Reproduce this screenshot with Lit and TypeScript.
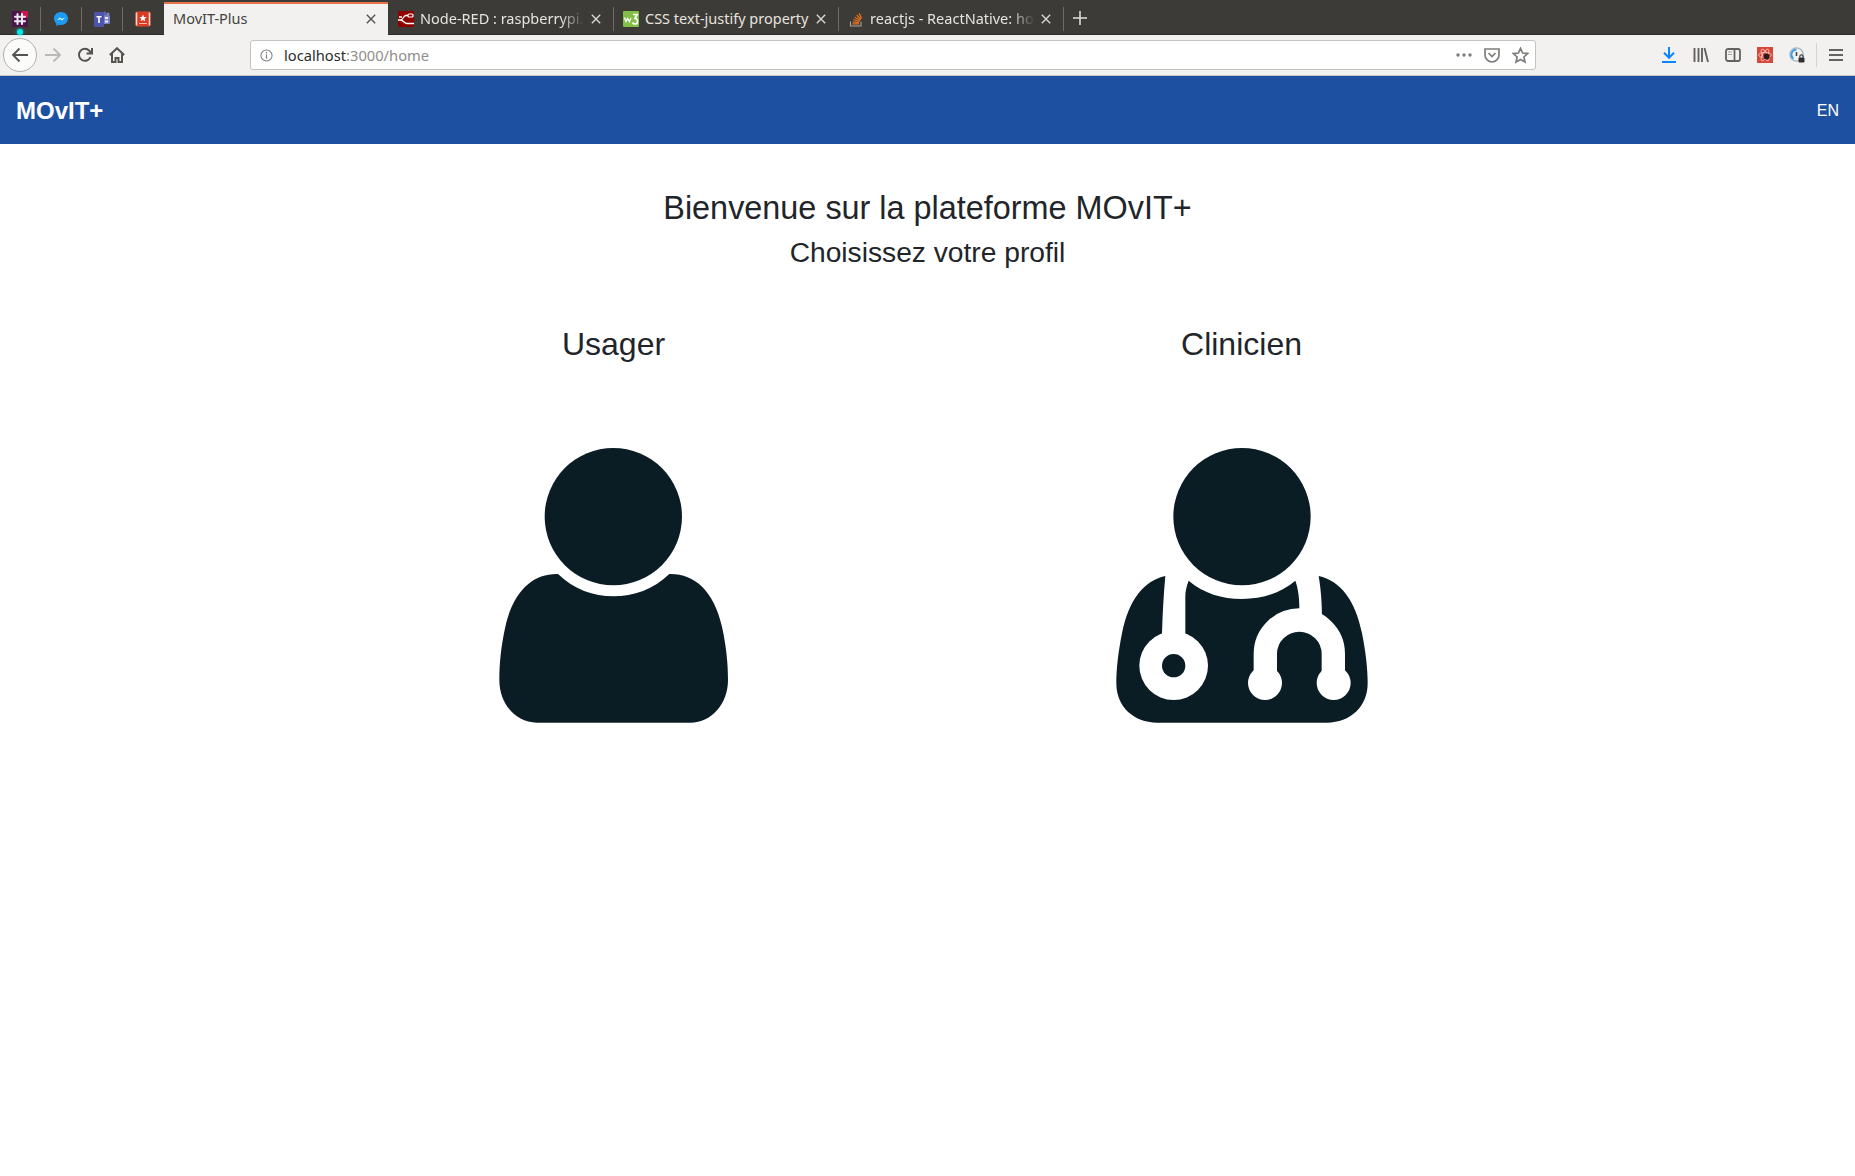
import { LitElement, html, css, svg } from 'lit';
import { customElement } from 'lit/decorators.js';

const slackIcon = svg`<svg viewBox="0 0 16 16" width="16" height="16">
  <rect width="16" height="16" fill="#4a154b"/><path d="M9 0h7v7H9z" fill="#c8174f"/>
  <path d="M5.500 3v10M10 3v10M3 5.800h10M3 10.200h10" stroke="#f1e9f0" stroke-width="2" stroke-linecap="round"/>
</svg>`;
const messengerIcon = svg`<svg viewBox="0 0 16 16" width="16" height="16">
  <path d="M8 1C4 1 1 3.900 1 7.600c0 2 .9 3.700 2.300 4.900V15l2.300-1.300c.8.2 1.600.3 2.400.3 4 0 7-2.900 7-6.500S12 1 8 1z" fill="#1c9bf2"/>
  <path d="M3.800 9.500 7 6.600l1.700 1.500 3.400-1.700-3.100 3.100-1.700-1.500z" fill="#fff"/>
</svg>`;
const teamsIcon = svg`<svg viewBox="0 0 16 16" width="16" height="16">
  <rect x="8" y="4" width="8" height="9" rx="1.500" fill="#7b83c9"/><circle cx="10.500" cy="2.600" r="2" fill="#5c63b4"/><circle cx="14" cy="3" r="1.500" fill="#7b83c9"/>
  <rect y="1" width="10" height="15" rx="1" fill="#4e55a8"/><path d="M2.500 5h5v1.600H5.800V12H4.200V6.600H2.500z" fill="#fff"/>
  <path d="M11 6h3v2h-3zM11 9.500h3v2h-3z" fill="#eef"/>
</svg>`;
const bookmarkIcon = svg`<svg viewBox="0 0 16 16" width="16" height="16">
  <rect x=".5" y=".5" width="15" height="15" rx="2" fill="#e8492d"/><rect x="2.500" y="1" width="11" height="14" fill="#d93a22"/>
  <path d="M1.500 1.500v13M14.500 1.500v13" stroke="#f7d9c9" stroke-width="1.500"/>
  <path d="m8 3.500 1.100 2.400 2.500.2-1.900 1.700.6 2.500L8 9l-2.300 1.300.6-2.500-1.900-1.700 2.500-.2z" fill="#fff"/><path d="M4 12.500h8" stroke="#f9b9a4"/>
</svg>`;
const nodeRedIcon = svg`<svg viewBox="0 0 16 16" width="16" height="16">
  <rect width="16" height="16" rx="1" fill="#8f0000"/>
  <path d="M0 9h2.500c3 0 2.500-4.500 5.500-4.500h2M0 9h2.500C5.500 9 6 12.500 9 12.500h1" fill="none" stroke="#fff" stroke-width="1.300"/>
  <rect x="10" y="3" width="5" height="3" rx="1" fill="none" stroke="#fff" stroke-width="1.200"/><path d="M10 12.500h6M1 6h3" stroke="#fff" stroke-width="1.300"/>
</svg>`;
const w3Icon = svg`<svg viewBox="0 0 16 16" width="16" height="16">
  <rect width="16" height="16" rx="1" fill="#82bf45"/>
  <path d="M1.500 6.500 3 10.500l1.700-3 1.700 3L8 7" fill="none" stroke="#fff" stroke-width="1.300"/>
  <path d="M10 3.500h4l-2 4c2 0 2.500 1.500 2.500 3s-1 2.500-2.500 2.500c-1 0-2-.5-2.500-1.500" fill="none" stroke="#fff" stroke-width="1.700"/>
</svg>`;
const stackIcon = svg`<svg viewBox="0 0 16 16" width="16" height="16">
  <path d="M2.500 10.500v4.500h10.500v-4.500" fill="none" stroke="#a9a59c" stroke-width="1.100"/>
  <path d="M4.500 12.800h6.500M4.700 10.800l6.300.9M5.400 8.500l6 2M6.700 6.200l5.300 3.300M8.800 4l4 4.500M11.200 2.200l2.400 5.300" stroke="#e8711c" stroke-width="1.300" fill="none"/>
</svg>`;
const closeIcon = svg`<svg viewBox="0 0 10 10" width="10" height="10"><path d="m.8.800 8.400 8.400M9.200.800.800 9.200" stroke="currentColor" stroke-width="1.400" fill="none"/></svg>`;

const userIcon = svg`<svg viewBox="-4 0 810 900" width="270" height="300">
  <circle cx="399" cy="260" r="206" fill="#0b1d24"/>
  <path fill="#0b1d24" d="M233 432C280 478 340 499 399 499C460 499 520 478 567 432C640 430 700 480 725 590C738 650 743 700 743 750C743 820 695 878 630 878L170 878C105 878 57 820 57 750C57 700 62 650 75 590C100 480 160 430 233 432Z"/>
</svg>`;
const clinicianIcon = svg`<svg viewBox="5 0 840 900" width="280" height="300">
  <circle cx="425" cy="260" r="206" fill="#0b1d24"/>
  <path fill="#0b1d24" d="M195 438L265 452C310 490 365 507 425 507C485 507 540 490 585 452L655 438C720 452 765 510 785 610C797 670 802 720 802 760C802 830 750 878 680 878L170 878C100 878 48 830 48 760C48 720 53 670 65 610C85 510 130 452 195 438Z"/>
  <path fill="#fff" d="M195 430L270 430L265 452C258 470 255 485 255 500L255 625L185 625L185 610C187 550 190 490 195 438Z"/>
  <path fill="#fff" d="M578 430L652 430L655 438C662 480 665 520 665 570L597 570L597 530C597 500 592 470 585 452Z"/>
  <circle cx="220" cy="707" r="103" fill="#fff"/><circle cx="220" cy="707" r="35" fill="#0b1d24"/>
  <path d="M495 750V672A102 102 0 0 1 699 672V750" fill="none" stroke="#fff" stroke-width="70"/>
  <circle cx="494" cy="759" r="51" fill="#fff"/><circle cx="700" cy="759" r="51" fill="#fff"/>
</svg>`;

@customElement('app-root')
export class AppRoot extends LitElement {
  static styles = css`
    :host {
      display: block;
      min-height: 1176px;
      background: #fff;
      font-family: "Liberation Sans", Arial, sans-serif;
      color: #212529;
    }

    /* browser chrome */
    .tabbar {
      display: flex;
      height: 35px;
      box-sizing: border-box;
      background: #3d3b37;
      border-bottom: 1px solid #2a2925;
      font-family: "Noto Sans", sans-serif;
      font-size: 14.5px;
      color: #e6e4df;
    }
    .pinned {
      position: relative;
      width: 41px;
      display: flex;
      align-items: center;
      justify-content: center;
      box-sizing: border-box;
      padding: 4px 1px 0 0;
    }
    .pinned svg, .tab svg { flex: none; display: block; }
    .pinned.sepd::after, .tab.sepd::after {
      content: '';
      position: absolute;
      right: 0;
      top: 7px;
      height: 24px;
      width: 1px;
      background: #6e6c67;
    }
    .dot {
      position: absolute;
      left: 17px;
      top: 29px;
      width: 6px;
      height: 6px;
      border-radius: 50%;
      background: #00e5e5;
      box-shadow: 0 0 3px #00e5e5;
    }
    .tab {
      position: relative;
      width: 225px;
      flex: none;
      box-sizing: border-box;
      display: flex;
      align-items: center;
      gap: 6px;
      padding: 4px 13px 0 9px;
    }
    .tab.active {
      width: 224px;
      margin-right: 1px;
      height: 35px;
      margin-top: 2px;
      padding: 0 12px 4px 9px;
      background: #f2f1ef;
      color: #45433f;
      border-top: 2px solid #e8734a;
    }
    .title {
      flex: 1;
      min-width: 0;
      margin-bottom: 2px;
      white-space: nowrap;
      overflow: hidden;
    }
    .title.fade {
      -webkit-mask-image: linear-gradient(to right, #000 85%, transparent);
      mask-image: linear-gradient(to right, #000 85%, transparent);
    }
    .close { color: #d8d6d1; flex: none; display: flex; }
    .active .close { color: #55534f; }
    .newtab {
      width: 34px;
      display: flex;
      align-items: center;
      justify-content: center;
      padding-top: 1px;
      margin-left: -1px;
    }
    .toolbar {
      display: flex;
      align-items: center;
      height: 41px;
      box-sizing: border-box;
      background: #f2f1ef;
      border-bottom: 1px solid #c9c8c5;
      padding-left: 3px;
    }
    .btn {
      flex: none;
      height: 34px;
      display: flex;
      align-items: center;
      justify-content: center;
    }
    .back {
      width: 34px;
      box-sizing: border-box;
      border: 1px solid #b1b0ad;
      border-radius: 50%;
      background: #fbfbfa;
    }
    .forward, .reload { width: 32px; }
    .home { width: 31px; }
    .urlbar {
      flex: none;
      width: 1286px;
      height: 30px;
      margin-left: 118px;
      box-sizing: border-box;
      border: 1px solid #c4c3c0;
      border-radius: 3px;
      background: #fff;
      display: flex;
      align-items: center;
      padding: 0 1px 0 9px;
      font-family: "Noto Sans", sans-serif;
      font-size: 14.7px;
    }
    .url { margin-left: 11px; flex: 1; color: #8e8d8a; }
    .url b { font-weight: 400; color: #2e2d2a; }
    .urlbtn { width: 28px; display: flex; justify-content: center; }
    .tools { display: flex; align-items: center; margin-left: 117px; }
    .tools .btn { width: 32px; }
    .divider { width: 1px; height: 24px; background: #d5d4d1; margin-left: 3px; }
    .tools .menu { margin-left: 3px; }

    /* page */
    .navbar {
      display: flex;
      align-items: center;
      justify-content: space-between;
      box-sizing: border-box;
      height: 68px;
      padding: 1px 16px 0;
      background: #1e50a2;
      color: #fff;
    }
    .brand { font-size: 24px; font-weight: 700; }
    .lang { font-size: 16px; }
    main {
      display: flex;
      flex-direction: column;
      align-items: center;
      padding-top: 44px;
    }
    h1 {
      margin: 0;
      font-size: 32.4px;
      line-height: 40px;
      font-weight: 400;
    }
    h2 {
      margin: 4px 0 0;
      font-size: 28.2px;
      line-height: 40px;
      font-weight: 400;
    }
    .profiles {
      display: grid;
      grid-template-columns: 1fr 1fr;
      width: 1256px;
      margin-top: 52px;
    }
    .profile {
      display: flex;
      flex-direction: column;
      align-items: center;
    }
    .profile h3 {
      margin: 0 0 66px;
      font-size: 32px;
      line-height: 40px;
      font-weight: 400;
    }
    .profile svg { display: block; }
  `;

  render() {
    return html`
      <div class="tabbar">
        <div class="pinned sepd">${slackIcon}<span class="dot"></span></div>
        <div class="pinned sepd">${messengerIcon}</div>
        <div class="pinned sepd">${teamsIcon}</div>
        <div class="pinned">${bookmarkIcon}</div>
        <div class="tab active">
          <span class="title">MovIT-Plus</span>
          <span class="close">${closeIcon}</span>
        </div>
        <div class="tab sepd">
          ${nodeRedIcon}<span class="title fade">Node-RED : raspberrypi.</span>
          <span class="close">${closeIcon}</span>
        </div>
        <div class="tab sepd">
          ${w3Icon}<span class="title">CSS text-justify property</span>
          <span class="close">${closeIcon}</span>
        </div>
        <div class="tab sepd">
          ${stackIcon}<span class="title fade">reactjs - ReactNative: ho</span>
          <span class="close">${closeIcon}</span>
        </div>
        <div class="newtab">
          <svg viewBox="0 0 14 14" width="14" height="14"><path d="M7 0v14M0 7h14" stroke="#e6e4df" stroke-width="1.500"/></svg>
        </div>
      </div>

      <div class="toolbar">
        <div class="btn back">
          <svg viewBox="0 0 18 16" width="18" height="16"><path d="M17 8H2M8.500 1.500 2 8l6.500 6.500" fill="none" stroke="#55534f" stroke-width="1.800"/></svg>
        </div>
        <div class="btn forward">
          <svg viewBox="0 0 18 16" width="18" height="16"><path d="M1 8h15M9.500 1.500 16 8l-6.500 6.500" fill="none" stroke="#b9b8b5" stroke-width="1.800"/></svg>
        </div>
        <div class="btn reload">
          <svg viewBox="0 0 16 16" width="16" height="16"><path d="M13.500 10a6 6 0 1 1-1.200-6.300L14.500 6M15 1v5.500H9.500" fill="none" stroke="#55534f" stroke-width="2"/></svg>
        </div>
        <div class="btn home">
          <svg viewBox="0 0 16 16" width="16" height="16"><path d="M.8 8 8 1.200 15.200 8M3 6.500V15h3.500v-4h3v4H13V6.500" fill="none" stroke="#55534f" stroke-width="2"/></svg>
        </div>
        <div class="urlbar">
          <svg viewBox="0 0 14 14" width="13" height="13"><circle cx="7" cy="7" r="6" fill="none" stroke="#7e7d7a" stroke-width="1.100"/><path d="M7 6v4.500M7 3.300v1.500" stroke="#7e7d7a" stroke-width="1.300"/></svg>
          <span class="url"><b>localhost</b>:3000/home</span>
          <span class="urlbtn"><svg viewBox="0 0 16 4" width="16" height="4"><circle cx="2" cy="2" r="1.700" fill="#7e7d7a"/><circle cx="8" cy="2" r="1.700" fill="#7e7d7a"/><circle cx="14" cy="2" r="1.700" fill="#7e7d7a"/></svg></span>
          <span class="urlbtn"><svg viewBox="0 0 16 15" width="16" height="15"><path d="M1 1h14v6a7 7 0 0 1-14 0zM4.500 5 8 8.500 11.500 5" fill="none" stroke="#7e7d7a" stroke-width="1.700"/></svg></span>
          <span class="urlbtn"><svg viewBox="0 0 16 16" width="17" height="17"><path d="m8 1.300 2 4.400 4.800.5-3.600 3.200 1 4.700L8 11.700l-4.200 2.400 1-4.700L1.200 6.200 6 5.700z" fill="none" stroke="#7e7d7a" stroke-width="1.600"/></svg></span>
        </div>
        <div class="tools">
          <div class="btn"><svg viewBox="0 0 16 16" width="16" height="16"><path d="M8 0v10M3 5.800 8 10.800l5-5M1 15h14" fill="none" stroke="#0a84ff" stroke-width="2"/></svg></div>
          <div class="btn"><svg viewBox="0 0 16 16" width="16" height="16"><path d="M1.500 1v14M5.500 1v14M9 1v14M11.500 1l3.500 14" fill="none" stroke="#636260" stroke-width="1.900"/></svg></div>
          <div class="btn"><svg viewBox="0 0 16 14" width="16" height="14"><rect x="1" y="1" width="14" height="12" rx="2" fill="none" stroke="#636260" stroke-width="1.800"/><path d="M9.500 1v12" stroke="#636260" stroke-width="1.800"/><path d="M3 4h4M3 6.500h4" stroke="#a5a4a1"/></svg></div>
          <div class="btn"><svg viewBox="0 0 16 16" width="16" height="16"><rect width="16" height="16" fill="#d8473a"/><ellipse cx="8" cy="8" rx="6.500" ry="2.500" fill="none" stroke="#f3c9c2" stroke-width=".8"/><ellipse cx="8" cy="8" rx="6.500" ry="2.500" fill="none" stroke="#f3c9c2" stroke-width=".8" transform="rotate(60 8 8)"/><ellipse cx="8" cy="8" rx="6.500" ry="2.500" fill="none" stroke="#f3c9c2" stroke-width=".8" transform="rotate(120 8 8)"/><circle cx="9.500" cy="9.500" r="3" fill="#2b1a18"/></svg></div>
          <div class="btn"><svg viewBox="0 0 16 16" width="16" height="16"><circle cx="7.500" cy="7.500" r="6.600" fill="none" stroke="#a9b6c3" stroke-width="1.300"/><path d="M7.500 2.600a5 5 0 0 0-3 9" fill="none" stroke="#2f9bf0" stroke-width="1.800"/><path d="M7.500 5v4" stroke="#444" stroke-width="1.600"/><rect x="9.500" y="10.500" width="6" height="5" rx="1" fill="#2f2e2c"/><path d="M10.800 10.500V9.500a1.700 1.700 0 0 1 3.400 0v1" fill="none" stroke="#2f2e2c" stroke-width="1.100"/></svg></div>
          <div class="divider"></div>
          <div class="btn menu"><svg viewBox="0 0 14 12" width="14" height="12"><path d="M0 1h14M0 6h14M0 11h14" stroke="#636260" stroke-width="1.800"/></svg></div>
        </div>
      </div>

      <nav class="navbar">
        <span class="brand">MOvIT+</span>
        <span class="lang">EN</span>
      </nav>

      <main>
        <h1>Bienvenue sur la plateforme MOvIT+</h1>
        <h2>Choisissez votre profil</h2>
        <div class="profiles">
          <div class="profile"><h3>Usager</h3>${userIcon}</div>
          <div class="profile"><h3>Clinicien</h3>${clinicianIcon}</div>
        </div>
      </main>
    `;
  }
}
